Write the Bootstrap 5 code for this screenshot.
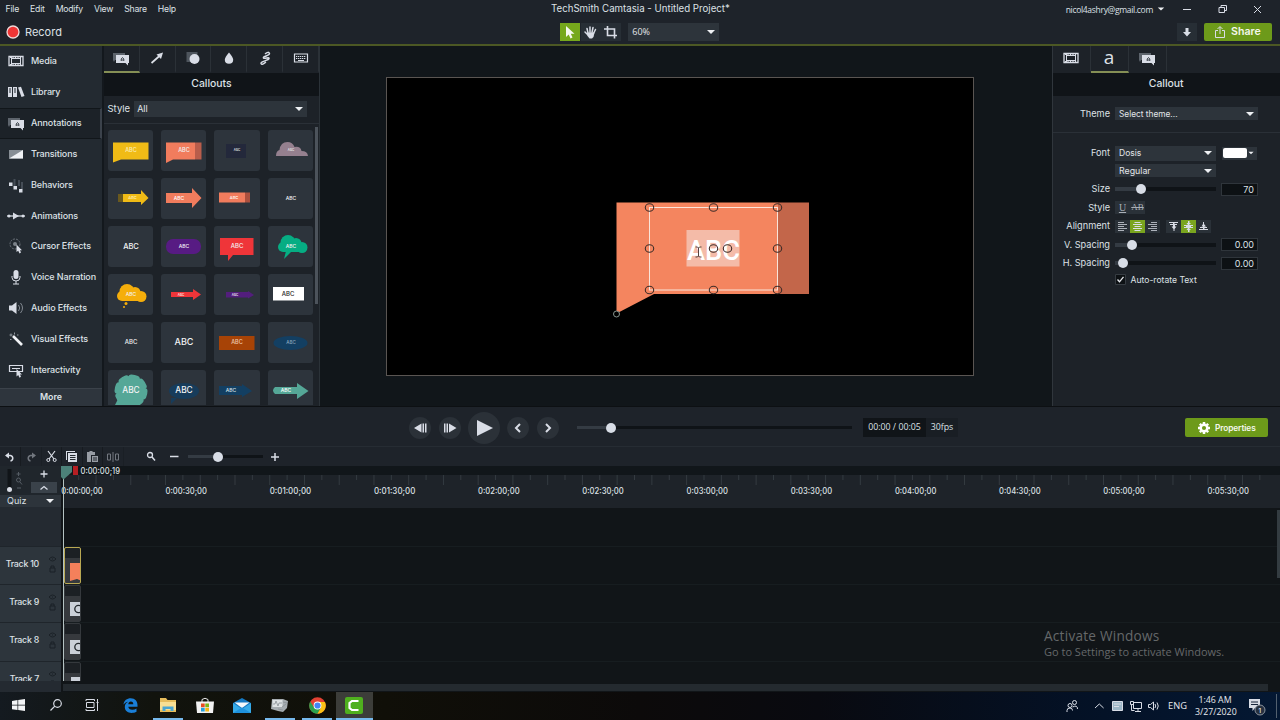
<!DOCTYPE html>
<html lang="en">
<head>
    <meta charset="UTF-8">
    <title>TechSmith Camtasia - Untitled Project*</title>
    <link href="https://cdn.jsdelivr.net/npm/bootstrap@5.3.2/dist/css/bootstrap.min.css" rel="stylesheet">
    <meta name="viewport" content="width=device-width, initial-scale=1.0">
    <style>
        body {
            width: 1280px;
            height: 720px;
            overflow: hidden;
            background: #1e232a;
            color: #dde1e6;
            font-family: "Inter", "Liberation Sans", sans-serif;
            font-size: 9px;
            line-height: 12px;
        }
        svg { display: block; flex: none; overflow: visible; }
        .ico { fill: #d9dde6; stroke: none; }
        .lin { fill: none; stroke: #d9dde6; }
        .seg { font-family: "Open Sans", sans-serif; }
        button { border: 0; padding: 0; color: inherit; }

        .menu-bar { height: 18px; }
        .menu-left { width: 551px; padding-left: 5.5px; gap: 11px; font-size: 8.7px; letter-spacing: -.22px; }
        .menu-right { margin-left: auto; }
        .tool-bar { height: 28px; border-bottom: 2px solid #4c5824; padding-top: 2px; }
        .record { font-size: 11px; padding-left: 6px; width: 559px; gap: 5px; }
        .tool { width: 20px; height: 18px; background: #272e35; margin-right: .6px; }
        .tool.active { background: #76a81c; }
        .zoom-select { width: 91px; height: 18px; margin-left: 6.5px; padding: 0 4px; }
        .pick { background: #2d343b; color: #e2e5e9; }
        .caret { width: 0; height: 0; border: 4px solid transparent; border-top-color: #eef0f3; border-bottom: 0; margin-left: auto; }
        .green { background: #6d9a1a; color: #f4f7ec; border-radius: 2px; font-weight: 600; }

        .work { height: 360px; background: #11161a; }
        .side-nav { width: 103px; background: #232a31; border-right: 1px solid #13181d; }
        .side-item { height: 30.85px; padding-left: 7px; font-size: 9px; font-weight: 500; letter-spacing: -.12px; }
        .side-item svg { width: 18px; height: 16px; margin-right: 6px; }
        .side-item span { white-space: nowrap; }
        .side-item.active { background: #1c2228; border-top: 1px solid #11161a; border-bottom: 1px solid #11161a; border-right: 2px solid #3b424b; }
        .more { height: 18px; background: #2e353d; border-top: 1px solid #3b424a; font-weight: 600; margin-top: auto; padding-bottom: 1px; font-size: 8.8px; }
        .panel { background: #1d2228; }
        .assets { width: 217px; border-left: 1px solid #13181d; border-right: 1px solid #2b3238; }
        .tabs { height: 26.5px; }
        .tab-cell { width: 36px; border-right: 1px solid #2b3137; border-bottom: 2px solid transparent; }
        .tab-cell.active { border-bottom-color: #858f55; }
        .panel-title { height: 23px; background: #101418; font-size: 10.4px; font-weight: 500; }
        .style-row { height: 28px; border-bottom: 1px solid #2a3037; padding: 0 12px 1px 3.5px; gap: 4px; }
        .style-row .pick { width: 175px; height: 16px; padding: 0 4px 0 3px; }
        .tiles { display: grid; grid-template-columns: repeat(4, 45.5px); column-gap: 7.9px; row-gap: 7px; padding: 6.5px 0 0 3.5px; height: 281px; overflow: hidden; }
        .tile { height: 41px; background: #2d343c; border-radius: 3px; }
        .tiles-area { height: 281px; }
        .tiles-bar { width: 3px; height: 177px; background: #4c535b; margin: 3px 1px 0 auto; }

        .stage { width: 731px; padding: 31px 0 0 66px; }
        .frame { width: 588px; height: 299px; background: #000; border: 1px solid #5a5552; }
        .props { width: 228.5px; border-left: 1px solid #30363c; margin-left: auto; }
        .props .tab-cell { width: 38px; }
        .prop-row { height: 18.5px; }
        .prop-label { width: 57.5px; text-align: right; margin-right: 5px; font-size: 9.2px; white-space: nowrap; }
        .num { width: 37px; height: 13px; background: #0d1114; border: 1px solid #2f353b; text-align: right; padding-right: 3px; line-height: 11.5px; font-size: 9px; margin-left: 5px; }
        .mini { width: 15px; height: 13px; background: #2a3138; }
        .mini.on { background: #7aa51f; }
        .track-line { height: 4px; background: #0f1317; }
        .track-fill { height: 4px; background: #343b43; }
        .knob { width: 10px; height: 10px; border-radius: 50%; background: #d8dde6; flex: none; }

        .playback { height: 40px; border-top: 1px solid #0d1013; padding: 2px 0 0 409px; }
        .round-btn { width: 22px; height: 22px; border-radius: 50%; background: #2b3138; }
        .clock { font-family: "Open Sans", sans-serif; font-size: 8.8px; }
        .clock span { height: 19px; line-height: 19px; }
        .edit-bar { height: 20px; border-top: 1px solid #262c33; padding-left: .4px; }
        .edit-cell { width: 20.6px; height: 19px; border-right: 1px solid #171b20; }

        .timeline { height: 226px; background: #111518; }
        .track-heads { width: 61px; background: #242a31; }
        .head-top { height: 29px; background: #20262c; }
        .quiz { height: 12px; background: #2d343b; padding: 0 7px; }
        .head-gap { height: 39px; }
        .head-row { height: 38.2px; background: #2d353c; border-top: 1px solid #1f252b; padding: 0 4px 3px 0; gap: 9px; font-weight: 500; font-size: 8.8px; letter-spacing: -.25px; }
        .heads-clip { height: 135px; overflow: hidden; }
        .lane { height: 38.2px; border-top: 1px solid #171d20; padding-left: .5px; }
        .clip { width: 17.5px; height: 37px; border: 1px solid #35393d; border-radius: 2px; background: linear-gradient(#1c2024 29%, #36393d 29%); overflow: hidden; }
        .clip.picked { border-color: #b9a852; }
        .playhead { position: absolute; left: -2px; top: 0; }
        .v-scroll { position: absolute; right: 0; top: 44px; width: 3px; height: 68px; background: #343c41; }
        .h-scroll { height: 7px; width: 1205px; background: #242a2f; margin-top: 3px; }
        .watermark { position: absolute; right: 54px; top: 162px; width: 182px; color: #65686a; font-family: "Open Sans", sans-serif; }
        .watermark div { font-size: 13.6px; line-height: 16px; letter-spacing: .25px; }
        .watermark p { font-size: 11px; line-height: 15px; white-space: nowrap; }

        .taskbar { height: 28px; background: linear-gradient(90deg, #141a20 0, #11130d 12%, #100f08 30%, #0c0a0a 50%, #090a10 64%, #041125 84%, #041833 100%); }
        .task { width: 37.3px; height: 28px; border-bottom: 2px solid transparent; }
        .task.open { background: linear-gradient(#76b9ed, #76b9ed) center bottom / 30px 2px no-repeat; background-origin: border-box; background-clip: border-box; }
        .task.front { background-color: #3c3d39; background-size: 37px 2px; }
        .tray { margin-left: auto; font-family: "Open Sans", sans-serif; color: #e8eaee; }
    </style>
</head>
<body>
    <header>
        <div class="menu-bar d-flex align-items-center">
            <div class="menu-left d-flex">
                <span>File</span><span>Edit</span><span>Modify</span><span>View</span><span>Share</span><span>Help</span>
            </div>
            <div style="font-size:9.7px">TechSmith Camtasia - Untitled Project*</div>
            <div class="menu-right d-flex align-items-center">
                <span class="seg" style="font-size:8.5px;letter-spacing:-.3px;padding-top:1px">nicol4ashry@gmail.com</span>
                <i class="caret ms-1" style="transform:scale(.8)"></i>
                <svg width="115" height="18" class="lin"><path d="M18 9.500h8M54 7.500h5.500v5h-5.500zM56 7.500v-2h5.500v5h-2M89 6l7 7M96 6l-7 7"/></svg>
            </div>
        </div>
        <div class="tool-bar d-flex align-items-center">
            <div class="record d-flex align-items-center">
                <svg width="14" height="14"><circle cx="7" cy="7" r="6" fill="#ef3535" stroke="#f0d8d8" stroke-width="1.300"/></svg>
                <span>Record</span>
            </div>
            <button class="tool active d-flex align-items-center justify-content-center" style="margin-left:1px"><svg width="10" height="13"><path d="M1 0v11l2.700-2.500L5.500 12.500l2-1L5.800 7.700H9.500z" fill="#f5f8ef"/></svg></button>
            <button class="tool d-flex align-items-center justify-content-center"><svg width="13" height="13" class="lin"><path d="M4 7L3 2.500M6 6.500V1M8 6.500L9 1.500M9.500 7.500L11.500 3.500M4 9L1 6" stroke-width="1.500" stroke-linecap="round"/><path d="M3 6.500h7.500L9.500 11 8 12.500H5.500L3.500 10z" class="ico"/></svg></button>
            <button class="tool d-flex align-items-center justify-content-center"><svg width="14" height="13" class="lin" stroke-width="1.600"><path d="M3.500 0v9.500H13M0 3h10.500v9.500"/></svg></button>
            <div class="zoom-select pick d-flex align-items-center seg">60%<i class="caret"></i></div>
            <div class="tool ms-auto d-flex align-items-center justify-content-center" style="margin-right:7px"><svg width="8" height="9" class="ico"><path d="M2.500 0h3v4H8L4 8.500 0 4h2.500z"/></svg></div>
            <button class="green d-flex align-items-center" style="width:68px;height:18px;margin-right:8px;padding-left:11px;gap:6px;font-size:10.600px">
                <svg width="10" height="12" class="lin"><path d="M3 4.500H.500v7h9v-7H7M5 8V1M2.500 3L5 .500 7.500 3"/></svg>Share</button>
        </div>
    </header>

    <main class="work d-flex">
        <nav class="side-nav d-flex flex-column" id="sideNav"></nav>

        <section class="panel assets">
            <div class="tabs d-flex" id="assetTabs"></div>
            <div class="panel-title d-flex align-items-center justify-content-center">Callouts</div>
            <div class="style-row d-flex align-items-center"><span style="font-size:9.500px">Style</span><div class="pick d-flex align-items-center ms-auto">All<i class="caret"></i></div></div>
            <div class="tiles-area d-flex">
                <div class="tiles" id="tiles"></div>
                <div class="tiles-bar"></div>
            </div>
        </section>

        <section class="stage">
            <div class="frame">
                <svg width="586" height="297" viewBox="387 78 586 297" id="canvas">
                    <path d="M616.500 202.500H778V294H654L616.500 313.500z" fill="#f4855f"/>
                    <path d="M778 202.500h31V294h-31z" fill="#c3664a"/>
                    <rect x="686.500" y="230" width="53" height="36.500" fill="#f4bba8"/>
                    <text x="687" y="259.500" font-family="Roboto" font-weight="500" font-size="28.500" textLength="53" lengthAdjust="spacingAndGlyphs" fill="#fff">ABC</text>
                    <rect x="649.500" y="207.500" width="128" height="82.500" fill="none" stroke="#f9e4da"/>
                    <g id="handles" fill="none" stroke="#3f2d29" stroke-width="1.100"></g>
                    <path d="M695.500 247h2l1 1 1-1h2M698.500 248v8M695.500 257h2l1-1 1 1h2" fill="none" stroke="#55423c"/>
                    <circle cx="616.500" cy="314" r="3" fill="#000" stroke="#87958f"/>
                </svg>
            </div>
        </section>

        <aside class="panel props">
            <div class="tabs d-flex">
                <div class="tab-cell d-flex align-items-center justify-content-center"><svg width="16" height="16"><use href="#i-media"/></svg></div>
                <div class="tab-cell active d-flex align-items-center justify-content-center"><span class="seg" style="font-size:19px;line-height:18px;font-weight:500;padding-bottom:2px">a</span></div>
                <div class="tab-cell d-flex align-items-center justify-content-center"><svg width="16" height="16"><use href="#i-note"/></svg></div>
            </div>
            <div class="panel-title d-flex align-items-center justify-content-center">Callout</div>
            <div class="d-flex align-items-center" style="height:37px;border-bottom:1px solid #2a3037">
                <span class="prop-label">Theme</span><div class="pick d-flex align-items-center" style="width:143px;height:13px;padding:0 4px;font-size:8.300px">Select theme...<i class="caret"></i></div>
            </div>
            <div class="prop-row d-flex align-items-center" style="height:16px;margin-top:12.500px">
                <span class="prop-label">Font</span><div class="pick d-flex align-items-center" style="width:101px;height:15px;padding:0 4px;font-size:8.500px">Dosis<i class="caret"></i></div>
                <div class="pick d-flex align-items-center" style="width:35px;height:13px;margin-left:6px;padding:0 2px 0 1px"><span class="bg-white" style="width:25px;height:10px;border-radius:2px"></span><i class="caret" style="transform:scale(.65)"></i></div>
            </div>
            <div class="prop-row d-flex align-items-center" style="height:19px"><span class="prop-label"></span><div class="pick d-flex align-items-center" style="width:101px;height:13px;padding:0 4px;font-size:8.800px">Regular<i class="caret"></i></div></div>
            <div class="prop-row d-flex align-items-center"><span class="prop-label">Size</span><div class="track-line d-flex align-items-center" style="width:101px"><div class="track-fill" style="width:21px"></div><div class="knob"></div></div><div class="num">70</div></div>
            <div class="prop-row d-flex align-items-center"><span class="prop-label">Style</span>
                <div class="mini text-center text-decoration-underline" style="font:10px/13px 'Liberation Serif',serif;color:#a9afb7">U</div><div class="mini text-center text-decoration-line-through" style="font:9px/13px 'Liberation Serif',serif;color:#a9afb7">AB</div></div>
            <div class="prop-row d-flex align-items-center"><span class="prop-label">Alignment</span>
                <div class="mini d-flex align-items-center justify-content-center"><svg width="9" height="9" class="lin" opacity=".75"><path d="M0 .500h6M0 2.500h9M0 4.500h6M0 6.500h9M0 8.500h6"/></svg></div>
                <div class="mini on d-flex align-items-center justify-content-center"><svg width="9" height="9" class="lin"><path d="M1.500 .500h6M0 2.500h9M1.500 4.500h6M0 6.500h9M1.500 8.500h6"/></svg></div>
                <div class="mini d-flex align-items-center justify-content-center" style="margin-right:6px"><svg width="9" height="9" class="lin" opacity=".75"><path d="M3 .500h6M0 2.500h9M3 4.500h6M0 6.500h9M3 8.500h6"/></svg></div>
                <div class="mini d-flex align-items-center justify-content-center"><svg width="9" height="9"><path d="M0 0h9v1H5.500v1H8v1H6v1.500h1.500L5.500 7v2h-1V7L2.500 4.500H4V3H1V2h3V1H0z" class="ico"/></svg></div>
                <div class="mini on d-flex align-items-center justify-content-center"><svg width="9" height="11"><path d="M4 0h1.500v2H7L5 4h4v1H7v1h2v1H5l2 2H5.500v2H4V9H2.500L4 7H0V6h2V5H0V4h4L2.500 2H4z" class="ico"/></svg></div>
                <div class="mini d-flex align-items-center justify-content-center"><svg width="9" height="9"><path d="M4 0h1v2l2 2.500H5.500V5H8v1H5.500v1H9v1H0V7h4V6H1V5h3v-.5H2.500L4 2z" class="ico"/></svg></div>
            </div>
            <div class="prop-row d-flex align-items-center"><span class="prop-label">V. Spacing</span><div class="track-line d-flex align-items-center" style="width:101px"><div class="track-fill" style="width:12px"></div><div class="knob"></div></div><div class="num">0.00</div></div>
            <div class="prop-row d-flex align-items-center"><span class="prop-label">H. Spacing</span><div class="track-line d-flex align-items-center" style="width:101px"><div class="track-fill" style="width:3px"></div><div class="knob"></div></div><div class="num">0.00</div></div>
            <div class="d-flex align-items-center" style="height:14px;gap:5px;padding-left:62px;font-size:8.600px">
                <svg width="11" height="11"><path d="M.500.500h10v10H.500z" fill="#0d1114" stroke="#363c42"/><path d="M2.500 5.500l2 2.300 4-5" fill="none" stroke="#e6e8ec" stroke-width="1.300"/></svg><span>Auto-rotate Text</span>
            </div>
        </aside>
    </main>

    <section class="playback d-flex align-items-center">
        <button class="round-btn d-flex align-items-center justify-content-center"><svg width="12" height="10" class="ico"><path d="M0 5l7.500-4.500v9zM8.500.500H10v9H8.500zM11 .500h1.500v9H11z"/></svg></button>
        <button class="round-btn d-flex align-items-center justify-content-center" style="margin:0 7px 0 8px"><svg width="12" height="10" class="ico"><path d="M0 .500h1.500v9H0zM2.500.500H4v9H2.500zM5 .500L12.500 5 5 9.500z"/></svg></button>
        <button class="round-btn d-flex align-items-center justify-content-center" style="width:32px;height:32px"><svg width="15" height="16" class="ico"><path d="M0 0l16 8L0 16z"/></svg></button>
        <button class="round-btn d-flex align-items-center justify-content-center" style="margin:0 8px 0 7px"><svg width="6" height="8" class="lin" stroke-width="2"><path d="M5 0L1 4l4 4"/></svg></button>
        <button class="round-btn d-flex align-items-center justify-content-center"><svg width="6" height="8" class="lin" stroke-width="2"><path d="M1 0l4 4-4 4"/></svg></button>
        <div class="track-line d-flex align-items-center" style="width:275px;height:3px;margin-left:18px"><div class="track-fill" style="width:29px;height:3px"></div><div class="knob"></div></div>
        <div class="clock d-flex" style="margin-left:11px"><span class="text-center" style="width:63px;background:#101418">00:00 / 00:05</span><span class="text-center" style="width:32px;background:#191e24">30fps</span></div>
        <button class="green d-flex align-items-center ms-auto" style="width:83px;height:19px;margin-right:12px;padding-left:13px;gap:5px;font-size:8.300px;letter-spacing:-.1px">
            <svg width="12" height="12" viewBox="-6 -6 12 12"><circle r="3.300" fill="none" stroke="#fff" stroke-width="2.500"/><path d="M0-6v2M0 6V4M-6 0h2M6 0H4M-4.200-4.200l1.400 1.400M4.200 4.200L2.800 2.800M-4.200 4.200l1.400-1.400M4.200-4.200L2.800-2.800" stroke="#fff" stroke-width="2.500"/></svg>Properties</button>
    </section>

    <section class="edit-bar d-flex align-items-center">
        <div class="edit-cell d-flex align-items-center justify-content-center"><svg width="10" height="10" class="lin"><path d="M1.500 3.500h4a2.800 2.800 0 0 1 0 5.500" stroke-width="1.500"/><path d="M0 3.500L4 .500v6z" class="ico"/></svg></div>
        <div class="edit-cell d-flex align-items-center justify-content-center" style="opacity:.45"><svg width="10" height="10" class="lin"><path d="M8.500 3.500h-4a2.800 2.800 0 0 0 0 5.500" stroke-width="1.500"/><path d="M10 3.500L6 .500v6z" class="ico"/></svg></div>
        <div class="edit-cell d-flex align-items-center justify-content-center"><svg width="11" height="11" class="lin"><path d="M2 0l6 8M9 0L3 8" stroke-width="1.200"/><circle cx="2.300" cy="9" r="1.500"/><circle cx="8.700" cy="9" r="1.500"/></svg></div>
        <div class="edit-cell d-flex align-items-center justify-content-center"><svg width="11" height="11"><path d="M0 0h9v1H1v8H0zM2 2h9v9H2z" class="ico"/><path d="M4 4.500h5.500M4 6.500h5.500M4 8.500h5.500" stroke="#252b31"/></svg></div>
        <div class="edit-cell d-flex align-items-center justify-content-center"><svg width="11" height="11" style="opacity:.65"><path d="M0 1h2.500V0h3v1H8v3H4v7H0zM5 5h6v6H5z" class="ico"/><path d="M6 7h4M6 9h4" stroke="#252b31"/></svg></div>
        <div class="edit-cell d-flex align-items-center justify-content-center" style="opacity:.45"><svg width="12" height="10" class="lin"><path d="M.500 2h3v6h-3zM8.500 2h3v6h-3zM6 0v10"/></svg></div>
        <svg width="11" height="11" class="lin" style="margin-left:21px"><circle cx="5" cy="4" r="2.500" stroke-width="1.300"/><path d="M7 6l3 3.500" stroke-width="1.500"/></svg>
        <svg width="9" height="9" class="lin" stroke-width="1.500" style="margin-left:14px"><path d="M0 4.500h8.500"/></svg>
        <div class="track-line d-flex align-items-center" style="width:75px;margin-left:9px;height:3px"><div class="track-fill" style="width:25px;height:3px"></div><div class="knob"></div></div>
        <svg width="8" height="8" class="lin" stroke-width="1.500" style="margin-left:8.500px"><path d="M0 4h8M4 0v8"/></svg>
    </section>

    <section class="timeline d-flex">
        <div class="track-heads">
            <div class="head-top">
                <svg width="61" height="29">
                    <path d="M7.500 3h4v23h-4z" fill="#101418"/><circle cx="9.500" cy="23.500" r="2.500" class="ico"/>
                    <g fill="none" stroke="#555c64"><circle cx="18.500" cy="14" r="2"/><path d="M20 16l2 2.500M16.500 8h4M18.500 6v4M17 22h4"/></g>
                    <path d="M31 16h26v11H31z" fill="#3a424a"/>
                    <path d="M40.500 8h7M44 4.500v7M40.500 23.500l3.500-3 3.500 3" class="lin" stroke-width="1.300"/>
                </svg>
            </div>
            <div class="quiz d-flex align-items-center">Quiz<i class="caret"></i></div>
            <div class="head-gap"></div>
            <div class="heads-clip" id="heads"></div>
        </div>
        <div class="flex-grow-1 position-relative" style="margin-left:2px">
            <svg width="1217" height="42" viewBox="63 466 1217 42" id="ruler"><path d="M63 466h1217v9H63z" fill="#11161a"/><path d="M63 475h1217v33H63z" fill="#1e2329"/></svg>
            <div style="height:38px"></div>
            <div style="height:135px;overflow:hidden" id="lanes"></div>
            <div class="h-scroll"></div>
            <svg class="playhead" width="20" height="216"><path d="M2.500 10v205" stroke="#b4c2c2"/><path d="M0 0h11v6L2.500 13.500 0 11z" fill="#4c8179"/><path d="M12 0h5v9h-5z" fill="#b51f24"/></svg>
            <div class="v-scroll"></div>
            <div class="watermark"><div>Activate Windows</div><p>Go to Settings to activate Windows.</p></div>
        </div>
    </section>

    <footer class="taskbar d-flex align-items-center">
        <div class="task d-flex align-items-center justify-content-center"><svg width="13" height="12" fill="#f2f4f6"><path d="M0 2l5.500-1v4.700H0zM6.200.900L13 0v5.700H6.200zM0 6.400h5.500v4.700L0 10.200zM6.200 6.400H13V12l-6.800-.9z"/></svg></div>
        <div class="task d-flex align-items-center justify-content-center"><svg width="12" height="12" class="lin" stroke-width="1.200"><circle cx="7.500" cy="4.500" r="3.800"/><path d="M4.800 7.200L.500 11.500"/></svg></div>
        <div class="task d-flex align-items-center justify-content-center"><svg width="14" height="12" class="lin"><path d="M0 2V.500h8.500V2M.500 3.500h7.500v5H.500zM0 10v1.500h8.500V10M11.500 0v12M10.500 3.500h2"/></svg></div>
        <div class="task d-flex align-items-center justify-content-center"><svg width="15" height="15" viewBox="0 0 15 15"><path d="M.500 6.500C1 2.500 4 .300 7.700.300c4.500 0 6.800 3.200 6.800 6.700v1.700H5.300c.2 2 1.800 3 4 3 1.500 0 3-.4 4.200-1.200v3.200c-1.500.8-3 1.200-4.900 1.200-4 0-6.800-2.300-6.800-5.900 0-2.300 1.300-4.200 3.200-5.200C3.700 4 1.800 5 .500 6.500zM5.300 6.200h5c0-1.700-.8-2.600-2.400-2.600-1.500 0-2.400 1.100-2.600 2.600z" fill="#1a7fd8"/></svg></div>
        <div class="task open d-flex align-items-center justify-content-center"><svg width="16" height="14"><path d="M0 0h6l1.500 2H16v12H0z" fill="#e7bd5c"/><path d="M0 4h16v8H0z" fill="#f8df93"/><path d="M2.500 13V8.500h11V13h-3v-2h-5v2z" fill="#4aa6d2"/></svg></div>
        <div class="task d-flex align-items-center justify-content-center"><svg width="18" height="15"><path d="M6 4V1.500Q9-1 12 1.500V4" fill="none" stroke="#e8e8e8"/><path d="M0 3.500h18L17 15H1z" fill="#f2f2f2"/><path d="M5 5.500h3.700v3.700H5z" fill="#e84c22"/><path d="M9.300 5.500H13v3.700H9.300z" fill="#7cb518"/><path d="M5 9.800h3.700v3.700H5z" fill="#24a0dc"/><path d="M9.300 9.800H13v3.700H9.300z" fill="#f5b616"/></svg></div>
        <div class="task d-flex align-items-center justify-content-center"><svg width="18" height="15"><path d="M0 5l9-5 9 5v10H0z" fill="#1478c2"/><path d="M1.500 4.500h15L9 10z" fill="#f3f8fc"/><path d="M0 5l9 6 9-6v10H0z" fill="#35aae8"/><path d="M0 15l9-5.500L18 15z" fill="#1e91dc"/></svg></div>
        <div class="task open d-flex align-items-center justify-content-center"><svg width="17" height="14"><path d="M1 1l11 0 5 2-1 7-4 4-5-1-7-2z" fill="#a6adb1"/><path d="M1.500 2h10v7h-10z" fill="#dde2e4"/><path d="M2 6l2 0 1-3 2 5 1-3h3M12 4l4 1M11 9l4-3M7 11l5 1" fill="none" stroke="#8a9297" stroke-width=".8"/></svg></div>
        <div class="task open d-flex align-items-center justify-content-center"><svg width="17" height="17" viewBox="-8.500 -8.500 17 17"><circle r="8.300" fill="#e34133"/><path d="M-7.300-4A8.300 8.300 0 0 0 0 8.300L3.600 2-3.500 2z" fill="#2ba24c"/><path d="M0 8.300A8.300 8.300 0 0 0 7.500-3.600H0L3.600 2z" fill="#fbc116"/><circle r="3.900" fill="#fff"/><circle r="3.100" fill="#4285f4"/></svg></div>
        <div class="task open front d-flex align-items-center justify-content-center"><svg width="18" height="17"><rect width="18" height="17" rx="2" fill="#4fb01e"/><path d="M13.500 4H7L4.500 6v5L7 13h6.500" fill="none" stroke="#fff" stroke-width="2.200"/></svg></div>
        <div class="tray d-flex align-items-center">
            <svg width="100" height="20" viewBox="1064 696 100 20" class="lin">
                <circle cx="1070" cy="705.500" r="2"/><circle cx="1074.500" cy="702.500" r="2"/><path d="M1067 712v-1.500q0-2.500 3-2.500 2.500 0 2.500 2.500M1072.500 707q5-2.500 5 2"/>
                <path d="M1095 708l4.300-4 4.300 4"/>
                <path d="M1112.500 701.500h10v9h-10z" fill="#9db6c6"/><path d="M1114 704h7M1114 706.500h5"/>
                <path d="M1133.500 702.500h8v6h-8zM1135 711.500h6M1138 709v2M1130.500 701.500h3v3h-3zM1131.500 704.500v6h3"/>
                <path d="M1148.500 704.500h2l3-2.500v8l-3-2.500h-2zM1155 704q1.500 2 0 4M1157 702.500q2.500 3.500 0 7"/>
            </svg>
            <span style="font-size:9.300px;margin-left:4px;width:27px">ENG</span>
            <div class="text-center" style="font-size:8.800px;line-height:12px;width:40px;white-space:nowrap">1:46 AM<br>3/27/2020</div>
            <svg width="37" height="24" style="margin-left:8px" viewBox="1243 695 37 24"><path d="M1249 700h11v9h-5l-2.500 3v-3H1249z" class="ico"/><path d="M1251 703h7M1251 705.500h7" stroke="#17253b"/><circle cx="1260" cy="711" r="5" fill="#263141" stroke="#8b939e"/><text x="1260" y="714" font-size="8" text-anchor="middle" fill="#fff">1</text><path d="M1276.500 695v24" stroke="#52606f"/></svg>
        </div>
    </footer>

    <!-- Shared icons, 16 x 16 -->
    <svg width="0" height="0" class="position-absolute">
        <symbol id="i-media" viewBox="0 0 16 16"><path d="M1 3.500h14v9H1z" class="lin" stroke-width="1.300"/><path d="M3.500 3v10M12.500 3v10M3.500 10.500h9M3.500 5.500h9" class="lin"/><path d="M2 4.500h12M2 11.500h12" class="lin" stroke-dasharray="1 1.500"/></symbol>
        <symbol id="i-library" viewBox="0 0 16 16"><path d="M0 3h4v10H0zM5 3h4v10H5zM10 3.500l3-.8L16.500 12l-3 1z" class="ico"/><path d="M2 4v5M7 4v5" stroke="#232a31"/></symbol>
        <symbol id="i-note" viewBox="0 0 16 16"><path d="M0 3h12v7H2l-1 2-1-2z" fill="#5d646c"/><path d="M3 5h13v8h-1v2.500L12.500 13H3z" class="ico"/><path d="M8.200 11V9q1.300-3 2.600 0v2M8.200 10h2.600" fill="none" stroke="#3c434b"/></symbol>
        <symbol id="i-trans" viewBox="0 0 16 16"><path d="M1 4h14v8.500H1z" fill="#878e95"/><path d="M15 4v8.500H1z" fill="#f0f2f5"/></symbol>
        <symbol id="i-behave" viewBox="0 0 16 16"><path d="M6.500 2v7M11 3v6M14 5v7" stroke="#454d56" stroke-width="2"/><path d="M1 5.500h3.500V9H1zM5.500 9H9v3.500H5.500zM11 12h3.500v3.500H11z" class="ico"/></symbol>
        <symbol id="i-anim" viewBox="0 0 16 16"><path d="M-1 8H17" stroke="#b9bfc6" stroke-width="1.500"/><path d="M5 4.500L11 8l-6 3.500z" class="ico"/><circle cx="1" cy="8" r="1.500" class="ico"/><circle cx="15" cy="8" r="1.500" class="ico"/></symbol>
        <symbol id="i-cursor" viewBox="0 0 16 16"><circle cx="7" cy="6" r="5" fill="none" stroke="#6b727a" stroke-dasharray="2 1"/><circle cx="7" cy="6" r="2" fill="#7b828a"/><path d="M8.500 6.500v7.500l1.700-1.300 1.300 2.700 1.500-.8-1-2.300h2z" class="ico"/></symbol>
        <symbol id="i-mic" viewBox="0 0 16 16"><rect x="5.500" y="1" width="5" height="9" rx="2.500" class="ico"/><path d="M4 7v1.500Q4 12 8 12t4-3.500V7M8 12v3M5 15h6" class="lin"/></symbol>
        <symbol id="i-audio" viewBox="0 0 16 16"><path d="M1 5.500h3L8.500 2v12L4 10.500H1z" class="ico"/><path d="M10.500 5q2.500 3 0 6M12.500 3q4 5 0 10" fill="none" stroke="#838a92"/></symbol>
        <symbol id="i-wand" viewBox="0 0 16 16"><path d="M5 5l9 9" stroke="#f0f2f5" stroke-width="2.600"/><path d="M1.500 4h3M3 2.500v3M6.500 1.500v2M9 4h1.500M2 8.500h1.500" stroke="#8f969d"/></symbol>
        <symbol id="i-touch" viewBox="0 0 16 16"><path d="M1.500 3.500h13v6h-13zM4 6.500h8" class="lin" stroke-width="1.200"/><path d="M8.500 7v7.500l1.700-1.500 1.300 2.700 1.500-1-1-2.200h2z" class="ico"/></symbol>
        <symbol id="i-arrow" viewBox="0 0 16 16"><path d="M2.500 13L11 5.500" stroke="#dde1e8" stroke-width="1.700"/><path d="M14 2.500l-2 6.500L7.500 4.500z" class="ico"/></symbol>
        <symbol id="i-shape" viewBox="0 0 16 16"><path d="M1.500 2h11v10h-11z" fill="#4e555d"/><circle cx="9.500" cy="9" r="5" class="ico"/></symbol>
        <symbol id="i-drop" viewBox="0 0 16 16"><path d="M8 2.500q4.200 5 4.200 7.300a4.200 4 0 0 1-8.400 0Q3.800 7.500 8 2.500z" class="ico"/></symbol>
        <symbol id="i-squig" viewBox="0 0 16 16"><path d="M8 4q3.500-3 4.500-.5c.5 2-7 3-6 4.500s6-1.500 5.500.5-9 3-8 5 3.500-.5 5-1.500" class="lin" stroke-width="1.500"/></symbol>
        <symbol id="i-keys" viewBox="0 0 16 16"><path d="M1.500 4h13v8h-13z" class="lin" stroke-width="1.200"/><path d="M3 6.500h10M3 8.500h10" class="lin" stroke-dasharray="1.300 .7"/><path d="M5 10.500h6" class="lin"/></symbol>
    </svg>

    <script src="https://cdn.jsdelivr.net/npm/bootstrap@5.3.2/dist/js/bootstrap.bundle.min.js"></script>
    <script>
        const byId = id => document.getElementById(id);

        // Left navigation
        const sections = [
            ["media", "Media"], ["library", "Library"], ["note", "Annotations"], ["trans", "Transitions"],
            ["behave", "Behaviors"], ["anim", "Animations"], ["cursor", "Cursor Effects"], ["mic", "Voice Narration"],
            ["audio", "Audio Effects"], ["wand", "Visual Effects"], ["touch", "Interactivity"]
        ];
        byId("sideNav").innerHTML = sections.map(([icon, name]) =>
            `<div class="side-item d-flex align-items-center ${name === "Annotations" ? "active" : ""}">
                <svg><use href="#i-${icon}"/></svg><span>${name}</span></div>`
        ).join("") + `<div class="more d-flex align-items-center justify-content-center">More</div>`;

        byId("assetTabs").innerHTML = ["note", "arrow", "shape", "drop", "squig", "keys"].map((icon, i) =>
            `<div class="tab-cell d-flex align-items-center justify-content-center ${i ? "" : "active"}"><svg width="16" height="16"><use href="#i-${icon}"/></svg></div>`
        ).join("");

        // Callout thumbnails: shape, label size, label colour, label x, label y
        const p = (d, fill) => `<path d="${d}" fill="${fill}"/>`;
        const cloud = fill => `<g fill="${fill}"><circle cx="19" cy="17.500" r="7.500"/><circle cx="27" cy="18.500" r="5.500"/><circle cx="14" cy="22" r="5"/><circle cx="33" cy="22.500" r="5.500"/><path d="M14 20h19v7H14z"/></g>`;
        const thumbs = [
            [p("M5 12.500h35.500v17H13L5 32.500z", "#f0bb16"), 5.5, "#fbeebb"],
            [p("M5 12.500h29v17H12L5 33z", "#f17c5d") + p("M34 12.500h6.500v17H34z", "#b95d4b"), 5.5],
            [p("M12 14h20v14H12z", "#23283b"), 3],
            [p("M8 26q0-5 3.500-6 1-8 8-8 5 0 7 5 6-1 7 4 6 0 6.500 5z", "#95808f"), 3],
            [p("M10 16h6v8h-6z", "#6a591e") + p("M15 16h18v-4l7.500 8-7.500 7v-3H15z", "#f0bb16"), 4, "#fff0bb", 24.5],
            [p("M5 15h26v-5l9.500 10L31 30v-5H5z", "#f17c5d"), 5, "#fff", 18],
            [p("M5 14.500h26v10H5z", "#f17c5d") + p("M31 14.500h5v10h-5z", "#ac503e"), 4, "#fff", 20, 21],
            ["", 5],
            ["", 7.5],
            [`<rect x="5" y="13" width="35" height="15" rx="7" fill="#571b83"/>`, 5],
            [p("M6 12h33.500v17H19l-5 6v-6H6z", "#ef3539"), 6],
            [`<g transform="translate(1 -1)">${cloud("#06ad83")}</g>` + p("M18 25h6l-8 8z", "#06ad83"), 5],
            [`${cloud("#f5ae0b")}<circle cx="18" cy="29.500" r="1.500" fill="#f5ae0b"/><circle cx="16" cy="33" r="1" fill="#f5ae0b"/>`, 5],
            [p("M10 18h22v-3l8 5.500-8 5.500v-3H10z", "#ef3539"), 3, "#fff", 20, 21.500],
            [p("M12 18h22v-1l6 4-6 3.500v-1H12z", "#531e7d"), 3, "#fff", 21, 21.500],
            [p("M5 13h31v13.500H5z", "#fff"), 6, "#222", 20, 22],
            ["", 6],
            ["", 9],
            [p("M5 14h35.500v14H5z", "#a74306"), 5.5, "#f0cbb0"],
            [`<ellipse cx="22.500" cy="21" rx="17" ry="7" fill="#133f62"/>`, 4.5, "#8ca8bc"],
            [`<g fill="#55a797"><circle cx="23" cy="21" r="14"/><circle cx="23" cy="21" r="13.500" fill="none" stroke="#55a797" stroke-width="6" stroke-dasharray="5.500 5.100" stroke-linecap="round"/></g>` + p("M10 29l-3 6h12z", "#55a797"), 8.3],
            [`<ellipse cx="23" cy="21" rx="15" ry="8" fill="#173c5b"/>` + p("M10 28h6l-6 6z", "#173c5b"), 8.3],
            [p("M5 16h23v-2l10 7-10 6v-2H5z", "#133f62"), 5, "#d6e0e6", 17],
            [p("M7 17h22v-4l11.500 8L29 29v-5H7q-4-3.500 0-7z", "#55a797"), 5, "#fff", 18]
        ];
        byId("tiles").innerHTML = thumbs.map(([shape, size, color = "#f2f3f4", x = 23, y = 20 + size * .36]) =>
            `<div class="tile"><svg width="45" height="41">${shape}<text x="${x}" y="${y}" font-size="${size}" font-weight="500" fill="${color}" text-anchor="middle">ABC</text></svg></div>`
        ).join("");

        // Selection handles
        const handles = [[649.5, 207.5], [713.5, 207.5], [777.5, 207.5], [649.5, 248.5], [713.5, 248.5], [727.5, 248.5], [777.5, 248.5], [649.5, 290], [713.5, 290], [777.5, 290]];
        byId("handles").innerHTML = handles.map(([x, y]) => `<ellipse cx="${x}" cy="${y}" rx="4.200" ry="3.800"/>`).join("");

        // Ruler ticks and time labels
        let marks = `<text x="80.500" y="473.500" textLength="39.500" lengthAdjust="spacingAndGlyphs">0:00:00;19</text>`;
        for (let i = 1; i < 70; i++) {
            const x = 61.3 + i * 17.37;
            marks += `<path d="M${x} 475v${i % 2 ? 5 : 10}" stroke="#343b41"/>`;
        }
        for (let i = 0; i < 12; i++) {
            const minutes = String(Math.floor(i / 2)).padStart(2, "0");
            marks += `<text x="${61.3 + i * 104.2}" y="494" textLength="41.500" lengthAdjust="spacingAndGlyphs">0:${minutes}:${i % 2 ? "30" : "00"};00</text>`;
        }
        byId("ruler").innerHTML += `<g font-size="8.600" font-weight="500" fill="#dde0e4">${marks}</g>`;

        // Tracks
        const note = `<rect x="5" y="16" width="14" height="14" fill="#cbd0d8"/><circle cx="13.500" cy="23" r="3.700" fill="none" stroke="#20252a" stroke-width="1.300"/>`;
        const tracks = [["Track 10", p("M5 15h12v18l-5-2-7 2z", "#f4805b")], ["Track 9", note], ["Track 8", note], ["Track 7", `<path d="M6 14h13v12H6z" fill="#cbd0d8"/>`]];
        byId("heads").innerHTML = tracks.map(([name]) =>
            `<div class="head-row d-flex align-items-center justify-content-end"><span>${name}</span>
                <svg width="9" height="20" fill="none" stroke="#1b2127"><path d="M1 5q3.500-4 7 0-3.500 4-7 0zM4 5h1M2 14h5v4H2zM3 14v-2h3v2"/></svg></div>`
        ).join("");
        byId("lanes").innerHTML = tracks.map(([name, art], i) =>
            `<div class="lane"><div class="clip ${i ? "" : "picked"}"><svg width="18" height="36">${art}</svg></div></div>`
        ).join("");
    </script>
</body>
</html>
